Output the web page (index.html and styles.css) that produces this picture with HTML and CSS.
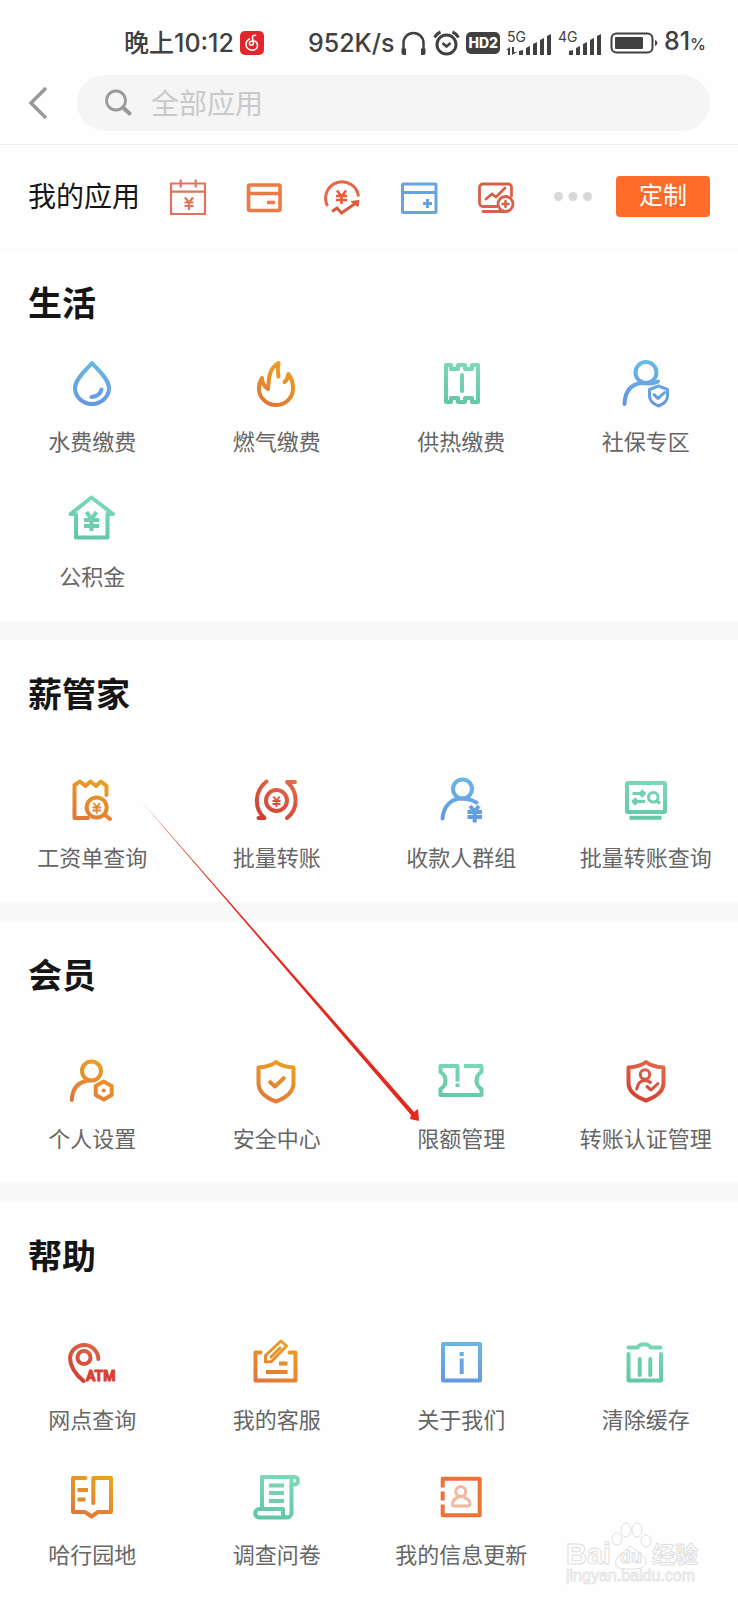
FILE: index.html
```html
<!DOCTYPE html>
<html lang="zh-CN">
<head>
<meta charset="utf-8">
<meta name="viewport" content="width=device-width, initial-scale=1">
<title>全部应用</title>
<link rel="stylesheet" href="styles.css">
</head>
<body>
<svg class="defs" aria-hidden="true">
  <defs>
    <linearGradient id="blue" gradientUnits="userSpaceOnUse" x1="24" y1="0" x2="20" y2="48"><stop offset="0" stop-color="#68b9e6"/><stop offset="1" stop-color="#6595df"/></linearGradient>
    <linearGradient id="orange" gradientUnits="userSpaceOnUse" x1="36" y1="0" x2="12" y2="48"><stop offset="0" stop-color="#eba51c"/><stop offset="1" stop-color="#e0743c"/></linearGradient>
    <linearGradient id="green" gradientUnits="userSpaceOnUse" x1="28" y1="0" x2="20" y2="48"><stop offset="0" stop-color="#7ed9bd"/><stop offset="1" stop-color="#60c6a4"/></linearGradient>
    <linearGradient id="red" gradientUnits="userSpaceOnUse" x1="36" y1="0" x2="12" y2="48"><stop offset="0" stop-color="#df6f4a"/><stop offset="1" stop-color="#d03a32"/></linearGradient>
  </defs>
</svg>

<div class="screen">
  <header class="top">
    <div class="status">
      <div class="status-time">
        <span>晚上10:12</span>
        <svg class="badge" viewBox="0 0 24 24"><rect width="24" height="24" rx="5" fill="#e3262b"/><path d="M15.500 4.500c-2-.8-3.300.4-3 2.200l.9 5.300a2 2 0 1 1-2.200-1.800c4-.9 6.300 1 6.300 4 0 3-2.500 5-5.500 5s-6-2.200-6-5.700C6 10.700 7.500 9 9.500 8" fill="none" stroke="#fff" stroke-width="1.600" stroke-linecap="round"/></svg>
      </div>
      <div class="status-info">
        <span>952K/s</span>
        <svg class="headphones" viewBox="0 0 26 26"><path d="M3 22V13a10 10 0 0 1 20 0v9" fill="none" stroke="#404040" stroke-width="2.500"/><path d="M1 18.500h4.500V25H3a2 2 0 0 1-2-2zM25 18.500h-4.500V25H23a2 2 0 0 0 2-2z" fill="#404040"/></svg>
        <svg class="alarm" viewBox="0 0 27 26"><g fill="none" stroke="#404040" stroke-width="3"><circle cx="13.500" cy="14.500" r="9.500"/><path d="M1.500 7.500C3 5 5 3 7.500 2M25.500 7.500C24 5 22 3 19.500 2"/><path d="M9.500 13l4 3.500 4-3.500" stroke-width="2.500"/></g></svg>
        <span class="hd">HD2</span>
        <svg class="signal" viewBox="0 -6 46 38"><text x="1" y="12">5G</text><path d="M13 21l4-1v5h-4zM20 18l4-2v9h-4zM27 14l4-2v13h-4zM34 10l4-2v17h-4zM41 6l4-2v21h-4z"/><path d="M0 20l4-3v8H2v-5zM6 25v-8h2v5h3z"/></svg>
        <svg class="signal" viewBox="0 -6 46 38"><text x="0" y="12">4G</text><path d="M11 21l4-1v5h-4zM18 18l4-2v9h-4zM25 14l4-2v13h-4zM32 10l4-2v17h-4zM39 6l4-2v21h-4z"/></svg>
        <svg class="battery" viewBox="0 0 48 22"><rect x="1.500" y="1.500" width="41" height="19" rx="5" fill="none" stroke="#404040" stroke-width="2"/><rect x="5" y="5" width="28" height="12" rx="1" fill="#404040"/><path d="M45 8c3 1 3 5 0 6z" fill="#404040"/></svg>
        <span>81<small>%</small></span>
      </div>
    </div>
    <form class="search-row" role="search">
      <button class="back" type="button" aria-label="返回"><svg viewBox="0 0 20 34"><path d="M18 2L3 17l15 15" fill="none" stroke="#999" stroke-width="3.500"/></svg></button>
      <label class="search">
        <svg viewBox="0 0 28 28" aria-hidden="true"><circle cx="12" cy="11.500" r="9.500" fill="none" stroke="#999" stroke-width="2.800"/><path d="M19 18.500l6.500 6" stroke="#999" stroke-width="4" stroke-linecap="round"/></svg>
        <input type="search" placeholder="全部应用" aria-label="搜索应用">
      </label>
    </form>
  </header>

  <div class="mine">
    <h2 class="mine-title">我的应用</h2>
    <nav class="mine-apps" aria-label="我的应用">
      <a href="#" aria-label="工资日历"><svg viewBox="0 0 38 38" fill="none" stroke="#df735b" stroke-width="2.200"><path d="M2 5.500h34V36H2zM2 13.700h34M11.700 1.500v8M26.700 1.500v8M16 19.500l4 5 4-5M15.500 24.500h9M15.500 28h9M20 24.500V32"/></svg></a>
      <a href="#" aria-label="银行卡"><svg viewBox="0 0 38 38" fill="none" stroke="#ec7a44" stroke-width="3.600"><rect x="2.500" y="7" width="31.500" height="25.500" rx="1.500"/><path d="M2.500 15.500H34M21 24.500h8"/></svg></a>
      <a href="#" aria-label="理财"><svg viewBox="0 0 38 38" fill="none" stroke="#db5a40" stroke-width="3"><path d="M4.500 28A16.500 16.500 0 1 1 35.500 18.500" stroke="#e4684a"/><path d="M9 33.500l5-3.500 4.500 5L33 25"/><path d="M28 23.500l8-1-1 6z" fill="#db5a40" stroke-width="1"/><path d="M14 12.500l4.500 6 4.500-6M13 18h11M13 22h11M18.500 17v9" stroke="#ee5b34" stroke-width="2.600"/></svg></a>
      <a href="#" aria-label="添加卡片"><svg viewBox="0 0 38 38" fill="none" stroke="#68a3dc" stroke-width="3"><rect x="2.500" y="6" width="33.500" height="28.500" rx="1"/><path d="M2.500 14.500H36M23 25.500h9M27.500 21v9"/></svg></a>
      <a href="#" aria-label="收支分析"><svg viewBox="0 0 38 38" fill="none" stroke="#d4614a" stroke-width="2.800" stroke-linecap="round"><path d="M20 28.500H6a3.500 3.500 0 0 1-3.500-3.500V9.500A3.500 3.500 0 0 1 6 6h25a3.500 3.500 0 0 1 3.500 3.500V18M6 33.500h22M9 21l6-5 4 3 9-9"/><circle cx="28.500" cy="26" r="7.500"/><path d="M25.500 26h6M28.500 23v6" stroke-width="2.500"/></svg></a>
      <a href="#" aria-label="更多"><svg viewBox="0 0 38 38" fill="#d8d8d8"><circle cx="4.500" cy="18.500" r="4.500"/><circle cx="19" cy="18.500" r="4.500"/><circle cx="33.500" cy="18.500" r="4.500"/></svg></a>
    </nav>
    <button class="customize" type="button">定制</button>
  </div>

  <main>
    <section class="group group-compact">
      <h2>生活</h2>
      <div class="apps">
        <a href="#"><svg class="blue" viewBox="0 0 48 48"><path d="M24 3C18 10 7 19 7 28a17 16 0 0 0 34 0C41 19 30 10 24 3zM33.500 29.500c-1 4.500-4.500 7-10 7.500"/></svg><span>水费缴费</span></a>
        <a href="#"><svg class="orange" viewBox="0 0 48 48"><path d="M31.500 22c2.500-2 3.500-4 3.800-8C38.500 18 40 23 40 28A17 16.500 0 0 1 6 29c-.3-4.500 1-8 3-11 0 5 2 8.500 6 11 1-12 1-20 10.500-26-1 5-1 9 0 13.500"/></svg><span>燃气缴费</span></a>
        <a href="#"><svg class="green" viewBox="0 0 48 48"><path d="M9 5h5v4h7V5h7v4h7V5h6v37h-6v-4h-7v4h-7v-4h-7v4H9z"/><path d="M25 15v16"/></svg><span>供热缴费</span></a>
        <a href="#"><svg class="blue" viewBox="0 0 48 48"><circle cx="24" cy="12.500" r="10.500"/><path d="M2.500 44C3 31 9 24 20 23c7 1 12 .5 16-1.500"/><path class="fine" d="M36.500 26l9 3.500V36c0 5-4 8-9 10-5-2-9-5-9-10v-6.500zM32 34.500l4 4 6.500-6"/></svg><span>社保专区</span></a>
        <a href="#"><svg class="green" viewBox="0 0 48 48"><path d="M8 19H2.500l21-16.500L45 19h-5.500M8 19v23.500h31.500V19"/><path class="flat" d="M18.500 17l5 7 5-7M16 25h15M16 31h15M23.500 24v12"/></svg><span>公积金</span></a>
      </div>
    </section>

    <section class="group">
      <h2>薪管家</h2>
      <div class="apps">
        <a href="#"><svg class="orange" viewBox="0 0 48 48"><path d="M20 42H6.500V9L12 5.500l5.500 4.500 5-4.500 5.500 4.500 5-4.500 5.500 4.500v9"/><circle cx="28.700" cy="31.500" r="10"/><path d="M37 39l5 4"/><path class="thin" d="M25.500 27l3.200 4 3.200-4M24.500 31.500h8.500M24.500 34.500h8.500M28.700 31v6.500"/></svg><span>工资单查询</span></a>
        <a href="#"><svg class="red" viewBox="0 0 48 48"><circle cx="23.500" cy="24.500" r="10.500"/><path d="M13.500 5.500C1 15 1 33 11.500 42H5.500M34 42C46 33 45 15 34 6h8"/><path class="thin" d="M20.300 20.500l3.200 4 3.200-4M19.500 25h8M19.500 28h8M23.500 24.500V31"/></svg><span>批量转账</span></a>
        <a href="#"><svg class="blue" viewBox="0 0 48 48"><circle cx="25.500" cy="13" r="9.500"/><path d="M5.500 42.500C6.500 30 14 22.500 25 22.500c6 0 10 1.500 14.500 4"/><path class="flat" d="M33 30l4.500 5.500L42 30M30.500 36H45M30.500 41H45M37.700 35v11.500"/></svg><span>收款人群组</span></a>
        <a href="#"><svg class="green" viewBox="0 0 48 48"><rect x="5" y="7" width="38" height="29" rx="1"/><path class="flat" d="M7.500 41.700h32"/><path class="swap" d="M10.500 17.500H22M19 14.500l3.500 3-3.500 3M23 25.500H11.500M14.500 22.500l-3.500 3 3.500 3"/><circle class="fine" cx="31.300" cy="21.300" r="4.800"/><path class="swap" d="M35 25l3 2.500"/></svg><span>批量转账查询</span></a>
      </div>
    </section>

    <section class="group">
      <h2>会员</h2>
      <div class="apps">
        <a href="#"><svg class="orange" viewBox="0 0 48 48"><circle cx="23.500" cy="14" r="9.500"/><path d="M3.700 43C4.500 31 11 24.500 21 23.500"/><path d="M35.700 24.500l8 4.500v9l-8 4.500-8-4.500v-9z"/><circle class="dot" cx="35.700" cy="33.500" r="2"/></svg><span>个人设置</span></a>
        <a href="#"><svg class="orange" viewBox="0 0 48 48"><path d="M23 5c5 4 11 5 17.500 5.500V26c0 9-8 15-17.500 18.500C13.500 41 5.500 35 5.500 26V10.500C12 10 18 9 23 5z"/><path class="flat" d="M16 24l6 5.500L32 20"/></svg><span>安全中心</span></a>
        <a href="#"><svg class="green" viewBox="0 0 48 48"><path class="flat" d="M20.500 24.500V9H3.500v6q5 3 5 8.500t-5 8.500v6h41v-6q-5-3-5-8.500t5-8.500V9H27"/><path class="flat" d="M20.500 26.500v3.500"/></svg><span>限额管理</span></a>
        <a href="#"><svg class="red" viewBox="0 0 48 48"><path d="M24 5c5 4 11 5 17.500 5.500V26c0 9-8 14-17.500 17.500C14.500 40 6.500 35 6.500 26V10.500C13 10 19 9 24 5z"/><circle class="fine" cx="23" cy="17.500" r="4.700"/><path class="fine" d="M14.700 32c1-6 4-8.500 8.300-8.500 2 0 4 .7 5.500 2M25 29.500l4 3.500 7-6.500"/></svg><span>转账认证管理</span></a>
      </div>
    </section>

    <section class="group">
      <h2>帮助</h2>
      <div class="apps">
        <a href="#"><svg class="red" viewBox="0 0 48 48"><path d="M15.500 43C7 36 2 28 2 19.500A14.200 14.200 0 0 1 30.300 21"/><circle cx="16" cy="19.500" r="6.500"/><text x="18" y="43">ATM</text></svg><span>网点查询</span></a>
        <a href="#"><svg class="orange" viewBox="0 0 48 48"><path d="M7.500 14.500h-5v28h40v-28h-6"/><path class="fine" d="M12.500 24v-6.500L28 3l5.500 5L18.500 23.500zM18 19l9-9"/><path class="flat" d="M26 25.500h8.500M13 34h21.500"/></svg><span>我的客服</span></a>
        <a href="#"><svg class="blue" viewBox="0 0 48 48"><rect x="6" y="6" width="37" height="36.500"/><path class="flat" d="M24.700 14v4M24.700 20.500V36"/></svg><span>关于我们</span></a>
        <a href="#"><svg class="green" viewBox="0 0 48 48"><path d="M6.500 9.500h9c2-4.500 11-4.500 13 0h10M6.500 16v26.500h32.500V16M17.700 21v16M28.300 21v16"/></svg><span>清除缓存</span></a>
        <a href="#"><svg class="orange" viewBox="0 0 48 48"><path d="M17.500 5H5v34h12l6.500 4.500L30 39h13V5H25.300v25"/><path class="flat" d="M9.500 17h10.500M9.500 26.500h8"/></svg><span>哈行园地</span></a>
        <a href="#"><svg class="green" viewBox="0 0 48 48"><path d="M9 36V4h33a3.500 3.800 0 0 1 0 7.500h-3.500V40a4.500 4.500 0 0 1-4.500 4.500H6.500a4 4 0 0 1 0-8.500H30v4.500a4 4 0 0 0 4 4M38.500 11V7"/><path class="flat" d="M16 12.500h15M16 20h15M16 28h15"/></svg><span>调查问卷</span></a>
        <a href="#"><svg class="tangerine" viewBox="0 0 48 48"><path class="flat" d="M5.700 14.500V5.700h37v36.600h-37V31.500M5.700 18.500V27.500"/><g class="pale"><circle cx="23.700" cy="18.500" r="5"/><path d="M20.500 24.500c-3.500 1.500-5 4-5 6.500 0 1.500 1 2 2.500 2h12.500c1.500 0 2.500-.5 2.500-2 0-2.500-1.500-5-5.500-6.500"/></g></svg><span>我的信息更新</span></a>
      </div>
    </section>
  </main>

  <svg class="pointer" viewBox="0 0 280 322" aria-hidden="true"><path d="M1 1L274 312l4-3 1 12-9-2 1-4z" fill="#e5281e"/></svg>

  <svg class="watermark" viewBox="0 0 136 66" aria-hidden="true">
    <path d="M64 24c-6 6-12 9-14 14-2 8 4 9 14 9s17-1 16-9c-2-5-9-9-16-14z"/>
    <ellipse cx="51" cy="17" rx="5" ry="6"/><ellipse cx="60" cy="8" rx="5" ry="7"/><ellipse cx="71" cy="8" rx="5" ry="7"/><ellipse cx="80" cy="19" rx="5" ry="6"/>
    <text class="brand" x="0" y="42">Bai</text><text class="brand-small" x="54" y="41">du</text><text class="brand-cn" x="86" y="41">经验</text>
    <text class="host" x="0" y="59">jingyan.baidu.com</text>
  </svg>
</div>
</body>
</html>
```

FILE: styles.css
```css
* { box-sizing: border-box; }

body {
  margin: 0;
  background: #fefefe;
  color: #151515;
  font-family: "Noto Sans CJK SC", "Noto Sans", sans-serif;
}

a { color: inherit; text-decoration: none; }
button { border: 0; padding: 0; font: inherit; cursor: pointer; }
h2 { margin: 0; }
svg { display: block; flex: none; }

.defs { position: absolute; width: 0; height: 0; }

.screen { position: relative; overflow: hidden; }

.top {
  padding-bottom: 13px;
  border-bottom: 1px solid #f0f0f0;
}

/* Status bar */
.status {
  display: flex;
  justify-content: space-between;
  align-items: center;
  height: 75px;
  padding: 10px 32px 0 124px;
  color: #404040;
  font-family: Inter, "Noto Sans CJK SC", sans-serif;
  font-size: 25px;
  font-weight: 500;
  line-height: 36px;
  white-space: nowrap;
}
.status-time, .status-info { display: flex; align-items: center; gap: 6px; }
.status small { font-size: 16px; }
.badge { width: 24px; height: 24px; }
.headphones, .alarm { width: 27px; height: 26px; }
.signal { width: 46px; height: 38px; fill: #404040; }
.signal text { font-size: 14px; font-weight: 400; }
.battery { width: 48px; height: 22px; }
.hd {
  padding: 0 2px;
  border-radius: 5px;
  background: #404040;
  color: #fff;
  font-size: 14px;
  font-weight: 800;
  line-height: 22px;
}

/* Search */
.search-row {
  display: flex;
  align-items: center;
  gap: 29px;
  padding: 0 28px;
}
.back { background: none; }
.back svg { width: 20px; height: 34px; }
.search {
  display: flex;
  flex: 1;
  align-items: center;
  gap: 19px;
  height: 56px;
  padding: 0 27px;
  border-radius: 28px;
  background: #f5f5f5;
}
.search svg { width: 28px; height: 28px; }
.search input {
  flex: 1;
  min-width: 0;
  padding: 0 0 3px;
  border: 0;
  outline: 0;
  background: none;
  font: inherit;
  font-size: 28px;
  line-height: 40px;
}
.search input::placeholder { color: #c9c9c9; opacity: 1; }

/* Pinned apps */
.mine {
  display: flex;
  align-items: center;
  height: 104px;
  padding: 0 28px;
  border-bottom: 1px solid #fafafa;
}
.mine-title {
  padding-bottom: 3px;
  font-size: 28px;
  font-weight: 400;
  line-height: 40px;
}
.mine-apps {
  display: flex;
  flex: 1;
  justify-content: space-between;
  margin: 0 24px 0 29px;
}
.mine-apps svg { width: 38px; height: 38px; }
.customize {
  width: 94px;
  height: 41px;
  padding-bottom: 5px;
  border-radius: 4px;
  background: #ff6c29;
  color: #fff;
  font-size: 24px;
  line-height: 36px;
}

/* App groups */
.group { padding: 33px 0 31px; }
.group + .group { border-top: 19px solid #f9f9f9; }
.group h2 {
  padding: 0 28px;
  font-size: 34px;
  font-weight: 700;
  line-height: 40px;
}
.apps {
  display: grid;
  grid-template-columns: repeat(4, 1fr);
  row-gap: 40px;
  margin-top: 63px;
}
.group-compact .apps { margin-top: 38px; }
.apps a {
  display: flex;
  flex-direction: column;
  align-items: center;
  gap: 17px;
  color: #666;
  font-size: 22px;
  line-height: 30px;
  white-space: nowrap;
}
.apps svg {
  width: 48px;
  height: 48px;
  fill: none;
  stroke-width: 4;
  stroke-linecap: round;
  stroke-linejoin: round;
}
.apps .blue { stroke: url(#blue); }
.apps .orange { stroke: url(#orange); }
.apps .green { stroke: url(#green); }
.apps .red { stroke: url(#red); }
.apps .tangerine { stroke: #ec7238; }
.apps .flat { stroke-linecap: butt; stroke-width: 4; }
.apps .fine { stroke-width: 3; }
.apps .thin { stroke-width: 2; stroke-linecap: butt; }
.apps .swap { stroke-width: 3; stroke-linecap: butt; }
.apps .dot { fill: #e4862e; stroke: none; }
.apps .pale { stroke: #f4b69c; stroke-width: 3; }
.apps text {
  fill: #d9402f;
  stroke: #d9402f;
  stroke-width: 1;
  font-family: Roboto, sans-serif;
  font-size: 14px;
  font-weight: 700;
}

/* Overlays */
.pointer {
  position: absolute;
  top: 800px;
  left: 140px;
  width: 280px;
  height: 322px;
  pointer-events: none;
}
.watermark {
  position: absolute;
  right: 36px;
  bottom: 7px;
  width: 136px;
  height: 74px;
  pointer-events: none;
  fill: #fff;
  stroke: #dedede;
  stroke-width: 1;
  font-family: "Liberation Sans", "Noto Sans CJK SC", sans-serif;
}
.brand { font-size: 29px; font-weight: 700; }
.brand-small { font-size: 18px; font-weight: 700; }
.brand-cn { font-size: 23px; font-weight: 700; }
.host { font-size: 16px; stroke: #e6e6e6; }
```
